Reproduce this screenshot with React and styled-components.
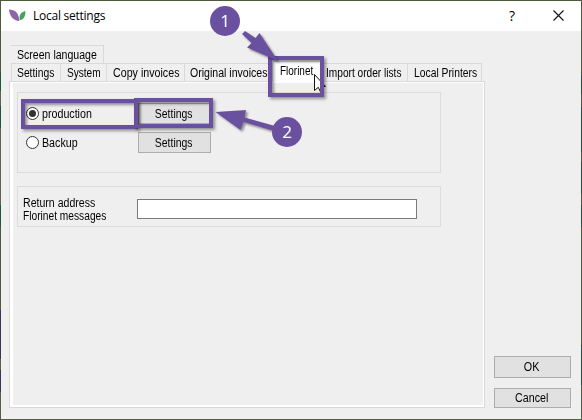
import React from "react";
import styled, { createGlobalStyle } from "styled-components";

const purple = "#6a519f";

const GlobalStyle = createGlobalStyle`
  * { box-sizing: border-box; }
  body { margin: 0; overflow: hidden; }
`;

const Dialog = styled.main`
  position: relative;
  display: flex;
  flex-direction: column;
  width: 582px;
  height: 420px;
  padding: 1px;
  background: linear-gradient(#4b5b3c 0 72px, #235539 72px 91px, #62634f 91px 106px, #235539 106px 128px, #62634f 128px 205px, #235539 205px 227px, #4b5b3c 227px 310px, #40305c 310px 359px, #5a6444 359px 370px, #40305c 370px 392px, #4f6043 392px);
  color: #000;
  font: 12px/14px "Liberation Sans", Arial, sans-serif;
  &::after {
    content: "";
    position: absolute;
    inset: 0 0 0 auto;
    width: 1px;
    background: linear-gradient(#4b5b3c 0 75px, #235043 75px 94px, #56573f 94px 107px, #235043 107px 152px, #56573f 152px 162px, #235043 162px 194px, #56573f 194px 205px, #235043 205px 227px, #4b5b3c 227px 345px, #235043 345px 385px, #4f6043 385px);
  }
`;

const TitleBar = styled.header`
  display: flex;
  align-items: center;
  flex: 0 0 30px;
  padding: 0 14px 0 8px;
  background: #fff;
`;

const Title = styled.h1`
  flex: 1;
  margin: 0 0 0 7px;
  font: 400 12px/16px "Open Sans", "Noto Sans", sans-serif;
  letter-spacing: -0.25px;
`;

const Help = styled.span`
  margin-right: 36px;
  font: 14px/16px "Open Sans", sans-serif;
`;

const Body = styled.div`
  display: flex;
  flex: 1;
  justify-content: space-between;
  padding: 14px 10px 11px 8px;
  background: #efefef;
`;

const TabArea = styled.section`
  display: flex;
  flex-direction: column;
  width: 476px;
  height: 363px;
`;

const TabRow = styled.div`
  display: flex;
  flex: 0 0 18px;
  padding-left: 2px;
`;

const Tab = styled.div`
  flex: 0 0 ${(p) => p.$w}px;
  min-width: 0;
  height: ${(p) => (p.$active ? 21 : 18)}px;
  margin: ${(p) => (p.$active ? "-2px 0 -1px" : "0")};
  padding: 2px 0 0 ${(p) => p.$pad ?? 6}px;
  border: solid #d9d9d9;
  border-width: 1px 1px 0 ${(p) => (p.$first ? 1 : 0)}px;
  background: ${(p) => (p.$active ? "#fff" : "transparent")};
  position: relative;
  z-index: ${(p) => (p.$active ? 1 : 0)};
`;

const Label = styled.span`
  display: inline-block;
  white-space: nowrap;
  transform: scaleX(${(p) => p.$scale ?? 0.88});
  transform-origin: ${(p) => p.$origin ?? "left"} center;
`;

const Panel = styled.div`
  flex: 1;
  padding: 9px 0 0 4px;
  border: 1px solid #d9d9d9;
  background: #efefef;
  box-shadow: inset 3px 0 #fff, inset -1px 0 #fff, inset 0 1px #fff, inset 0 -2px #fff;
`;

const Group = styled.div`
  display: flex;
  width: 424px;
  height: ${(p) => p.$h}px;
  margin: 1px 0 13px 3px;
  border: 1px solid #dcdcdc;
`;

const Options = styled.div`
  display: flex;
  flex-direction: column;
  gap: 8px;
  padding: 10px 0 0 8px;
`;

const Option = styled.div`
  display: flex;
  align-items: center;
  height: 21px;
`;

const Radio = styled.span`
  display: grid;
  place-items: center;
  width: 13px;
  height: 13px;
  margin-right: 3px;
  border: 1px solid #333;
  border-radius: 50%;
  background: #fff;
  &::after {
    content: "";
    width: 7px;
    height: 7px;
    border-radius: 50%;
    background: ${(p) => (p.$checked ? "#333" : "transparent")};
  }
`;

const OptionName = styled.div`
  width: 96px;
`;

const Button = styled.button`
  width: ${(p) => p.$w}px;
  height: ${(p) => p.$h}px;
  padding: 0 1px 0 0;
  border: 1px solid #adadad;
  background: #e1e1e1;
  color: #000;
  font: inherit;
`;

const AddressLabel = styled.div`
  width: 119px;
  padding: 10px 0 0 5px;
  line-height: 13px;
`;

const AddressInput = styled.input`
  width: 280px;
  height: 20px;
  margin-top: 12px;
  padding: 2px;
  border: 1px solid #7a7a7a;
  background: #fff;
`;

const Actions = styled.div`
  display: flex;
  flex-direction: column;
  justify-content: flex-end;
  gap: 10px;
`;

const Highlight = styled.div`
  position: absolute;
  z-index: 2;
  left: ${(p) => p.$x}px;
  top: ${(p) => p.$y}px;
  width: ${(p) => p.$w}px;
  height: ${(p) => p.$h}px;
  border: 4px solid ${purple};
  box-shadow: 2px 2px 3px #0006, inset 2px 2px 3px #0006;
`;

const Marks = styled.svg`
  position: absolute;
  z-index: 3;
  inset: 0;
  pointer-events: none;
`;

const Arrows = styled.g`
  fill: ${purple};
  filter: drop-shadow(2px 2px 1px #0006);
`;

const Badge = styled.div`
  position: absolute;
  z-index: 4;
  left: ${(p) => p.$x}px;
  top: ${(p) => p.$y}px;
  width: 30px;
  height: 30px;
  border-radius: 50%;
  background: ${purple};
  color: #fff;
  font: 17px/30px "Open Sans", sans-serif;
  text-align: center;
`;

const tabs = [
  { name: "Settings", w: 50, first: true, pad: 5, scale: 0.86 },
  { name: "System", w: 46, scale: 0.84 },
  { name: "Copy invoices", w: 78, scale: 0.89 },
  { name: "Original invoices", w: 88, pad: 5, scale: 0.88 },
  { name: "Florinet", w: 50, pad: 7, active: true, scale: 0.83 },
  { name: "Import order lists", w: 85, pad: 3, scale: 0.845 },
  { name: "Local Printers", w: 74, scale: 0.86 },
];

export default function App() {
  return (
    <Dialog>
      <GlobalStyle />
      <TitleBar>
        <svg width="17" height="14" viewBox="0 0 17 14">
          <path d="M0 .5C6 .5 10 4 10.300 12C4.500 12 .5 7 0 .5Z" fill="#8c65a8" />
          <path d="M16.300 2C12 3 9.800 6 10.800 11.500C15.500 10 16.800 6 16.300 2Z" fill="#42a45a" />
        </svg>
        <Title>Local settings</Title>
        <Help>?</Help>
        <svg width="16" height="16" viewBox="0 0 16 16">
          <path d="M2.500 2.500L12.500 12.500M12.500 2.500L2.500 12.500" stroke="#111" strokeWidth="1.1" />
        </svg>
      </TitleBar>
      <Body>
        <TabArea>
          <TabRow>
            <Tab $w={93}><Label $scale={0.88}>Screen language</Label></Tab>
          </TabRow>
          <TabRow>
            {tabs.map((t) => (
              <Tab key={t.name} $w={t.w} $first={t.first} $pad={t.pad} $active={t.active}>
                <Label $scale={t.scale}>{t.name}</Label>
              </Tab>
            ))}
          </TabRow>
          <Panel>
            <Group $h={81}>
              <Options>
                <Option>
                  <Radio $checked />
                  <OptionName><Label $scale={0.89}>production</Label></OptionName>
                  <Button $w={73} $h={21}><Label $origin="center" $scale={0.87}>Settings</Label></Button>
                </Option>
                <Option>
                  <Radio />
                  <OptionName><Label $scale={0.89}>Backup</Label></OptionName>
                  <Button $w={73} $h={21}><Label $origin="center" $scale={0.87}>Settings</Label></Button>
                </Option>
              </Options>
            </Group>
            <Group $h={41}>
              <AddressLabel>
                <Label $scale={0.88}>Return address</Label>
                <Label $scale={0.85}>Florinet messages</Label>
              </AddressLabel>
              <AddressInput aria-label="Return address Florinet messages" />
            </Group>
          </Panel>
        </TabArea>
        <Actions>
          <Button $w={77} $h={22}><Label $origin="center" $scale={0.9}>OK</Label></Button>
          <Button $w={77} $h={20}><Label $origin="center" $scale={0.89}>Cancel</Label></Button>
        </Actions>
      </Body>
      <Highlight $x={21} $y={99} $w={117} $h={30} />
      <Highlight $x={134} $y={98} $w={79} $h={30} />
      <Highlight $x={268} $y={56} $w={56} $h={41} />
      <Marks width="582" height="420" viewBox="0 0 582 420">
        <Arrows>
          <path d="M245 31L255.500 38L259.500 33L278 61L247 47.500L251.500 43L242 34Z" />
          <path d="M215.500 112L246 110L244.500 117.500L275 126L274 131L243.500 122L240.500 130Z" />
        </Arrows>
        <path d="M314.500 74.500V90.500L318.300 87.300L321 93L323.500 92L321.200 86.500H325.500Z" fill="#fff" stroke="#111" />
        <path d="M320 74H324V95H320Z" fill={purple} />
      </Marks>
      <Badge $x={210} $y={6}>1</Badge>
      <Badge $x={272} $y={117}>2</Badge>
    </Dialog>
  );
}
